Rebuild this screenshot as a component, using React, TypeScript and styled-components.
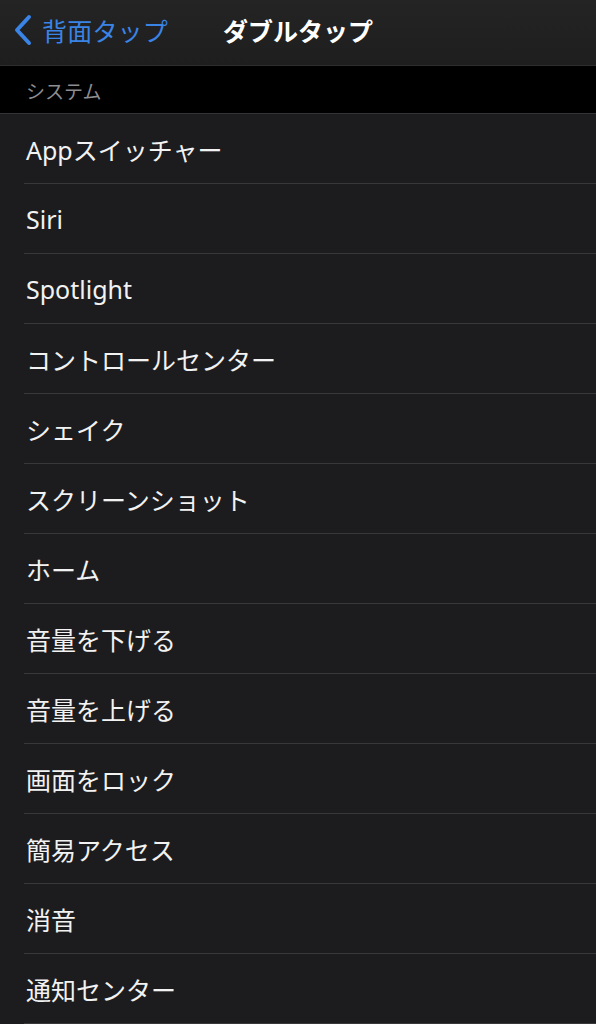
import styled, { createGlobalStyle } from 'styled-components';

const GlobalStyle = createGlobalStyle`
  body {
    margin: 0;
    background: #1c1c1e;
    font-family: "Noto Sans", "Noto Sans CJK JP", sans-serif;
    -webkit-font-smoothing: antialiased;
  }
`;

const Screen = styled.div`
  width: 596px;
  height: 1024px;
  overflow: hidden;
  background: #1c1c1e;
  display: flex;
  flex-direction: column;
`;

const NavBar = styled.header`
  height: 66px;
  flex-shrink: 0;
  display: grid;
  grid-template-columns: 1fr auto 1fr;
  align-items: center;
  background: linear-gradient(#242424, #1e1e1e);
  border-bottom: 1px solid #2e2e2e;
  padding-bottom: 5px;
  box-sizing: border-box;
`;

const BackButton = styled.div`
  display: flex;
  align-items: center;
  gap: 8px;
  padding-left: 12px;
  color: #3a84e6;
  font-size: 25px;
  letter-spacing: 0.2px;
`;

const Title = styled.h1`
  margin: 0;
  color: #ffffff;
  font-size: 25px;
  font-weight: 700;
`;

const SectionHeader = styled.div`
  height: 48px;
  flex-shrink: 0;
  display: flex;
  align-items: center;
  padding: 2px 26px 0;
  background: #000;
  border-bottom: 1px solid #333335;
  box-sizing: border-box;
  color: #8d8d92;
  font-size: 19px;
`;

const List = styled.ul`
  list-style: none;
  margin: 0;
  padding: 0 0 0 24px;
  background: #1c1c1e;
`;

const Row = styled.li`
  height: 70px;
  display: flex;
  align-items: center;
  padding-left: 2px;
  padding-top: 1px;
  box-sizing: border-box;
  border-bottom: 1px solid #38383a;
  color: #f2f2f2;
  font-size: 25px;
`;

const items = [
  'Appスイッチャー',
  'Siri',
  'Spotlight',
  'コントロールセンター',
  'シェイク',
  'スクリーンショット',
  'ホーム',
  '音量を下げる',
  '音量を上げる',
  '画面をロック',
  '簡易アクセス',
  '消音',
  '通知センター',
];

export default function App() {
  return (
    <Screen>
      <GlobalStyle />
      <NavBar>
        <BackButton>
          <svg width="22" height="32" viewBox="0 0 22 32">
            <path
              d="M17 3 L5 16 L17 29"
              fill="none"
              stroke="#3a84e6"
              strokeWidth="4"
              strokeLinecap="round"
              strokeLinejoin="round"
            />
          </svg>
          背面タップ
        </BackButton>
        <Title>ダブルタップ</Title>
        <div />
      </NavBar>
      <SectionHeader>システム</SectionHeader>
      <List>
        {items.map((label) => (
          <Row key={label}>{label}</Row>
        ))}
      </List>
    </Screen>
  );
}
